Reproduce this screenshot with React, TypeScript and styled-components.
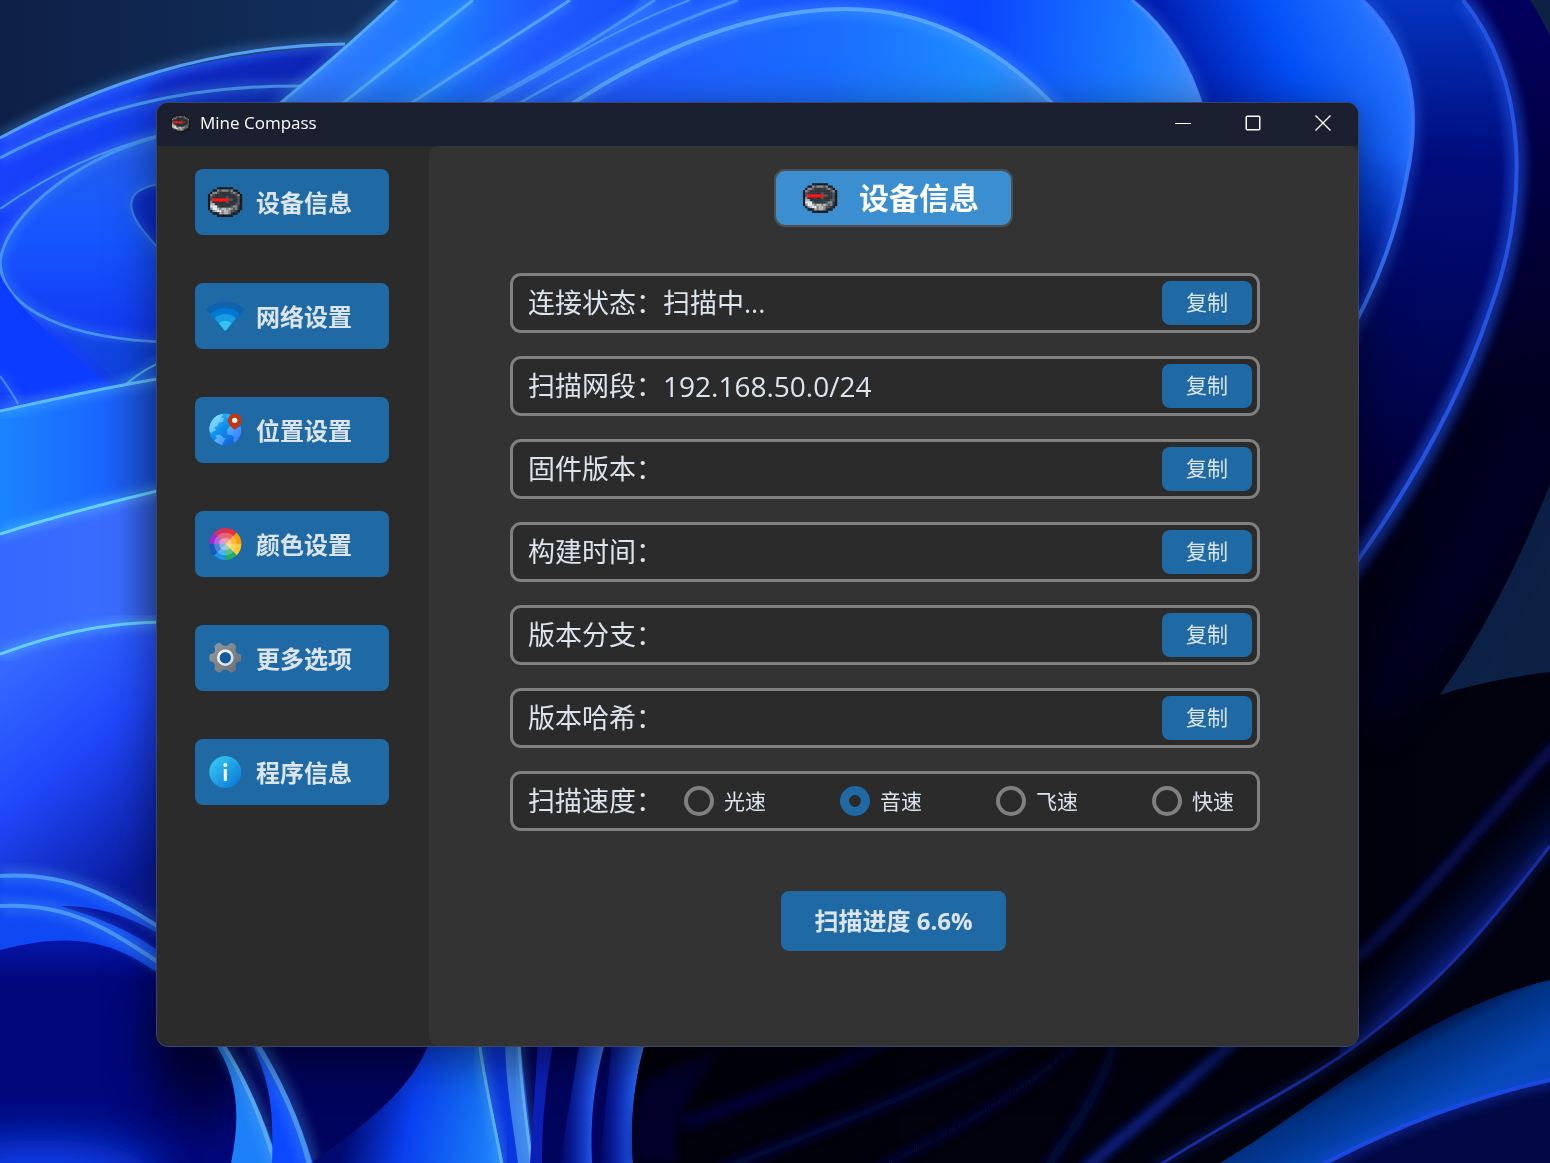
import React, { useState } from "react";
import styled, { createGlobalStyle } from "styled-components";

const GlobalStyle = createGlobalStyle`
  *, *::before, *::after { box-sizing: border-box; }
  body {
    margin: 0;
    background: #0c1f42;
    color: #dce4ee;
    font-family: "Open Sans", "Noto Sans CJK SC", sans-serif;
  }
  button, input { font-family: inherit; }
`;

const Desktop = styled.main`
  position: relative;
  display: flex;
  min-height: 100vh;
  padding: 102px 191px 116px 156px;
  overflow: hidden;
`;

const Backdrop = styled.svg`
  position: absolute;
  inset: 0;
  width: 100%;
  height: 100%;
`;

const Window = styled.section`
  position: relative;
  flex: 1;
  display: flex;
  flex-direction: column;
  border: 1px solid #3a4568;
  border-radius: 12px;
  background: #2b2b2b;
  overflow: hidden;
  box-shadow: 0 12px 48px rgba(0, 0, 0, 0.5);
`;

const TitleBar = styled.header`
  display: flex;
  align-items: center;
  height: 43px;
  padding: 0 0 3px 12px;
  background: #1b2030;
`;

const AppName = styled.span`
  flex: 1;
  margin-left: 8px;
  font-size: 17px;
  line-height: 24px;
  color: #ffffff;
`;

const CaptionButton = styled.button`
  display: grid;
  place-items: center;
  width: 70px;
  height: 100%;
  padding: 0;
  border: 0;
  background: transparent;
  color: #ffffff;
`;

const Body = styled.div`
  flex: 1;
  display: flex;
`;

const Sidebar = styled.nav`
  display: flex;
  flex-direction: column;
  gap: 48px;
  width: 272px;
  padding: 23px 40px 23px 38px;
`;

const NavButton = styled.button`
  display: flex;
  align-items: center;
  gap: 11px;
  height: 66px;
  padding: 0 10px;
  border: 0;
  border-radius: 8px;
  background: #1f6aa5;
  color: #dce4ee;
  font-size: 24px;
  font-weight: 700;
  line-height: 36px;
  white-space: nowrap;
`;

const NavLabel = styled.span`
  padding-top: 2px;
`;

const Panel = styled.div`
  flex: 1;
  display: flex;
  flex-direction: column;
  align-items: center;
  padding: 23px 0;
  border-radius: 9px;
  background: #333333;
`;

const PanelTitle = styled.h1`
  display: flex;
  align-items: center;
  gap: 19px;
  height: 58px;
  margin: 0;
  padding: 0 32px 0 24px;
  border: 2px solid #4d5154;
  border-radius: 11px;
  background: #3b8ed0;
  color: #ffffff;
  font-size: 30px;
  font-weight: 700;
  line-height: 44px;
`;

const FieldList = styled.div`
  display: flex;
  flex-direction: column;
  gap: 23px;
  align-self: stretch;
  margin: 46px 98px 60px 81px;
`;

const Field = styled.div`
  display: flex;
  align-items: center;
  height: 60px;
  padding: 0 5px 0 15px;
  border: 3px solid #808080;
  border-radius: 11px;
  background: #2b2b2b;
`;

const SpeedField = styled(Field)`
  padding-right: 23px;
`;

const FieldText = styled.span<{ $numeric?: boolean }>`
  font-size: ${(p) => (p.$numeric ? 28 : 27)}px;
  line-height: 40px;
  white-space: nowrap;
`;

const CopyButton = styled.button`
  width: 90px;
  height: 44px;
  margin-left: auto;
  padding: 0 0 2px;
  border: 0;
  border-radius: 8px;
  background: #1f6aa5;
  color: #dce4ee;
  font-size: 21px;
  line-height: 30px;
`;

const Options = styled.div`
  flex: 1;
  display: flex;
  justify-content: space-between;
  margin-left: 21px;
`;

const Option = styled.label`
  display: flex;
  align-items: center;
  gap: 10px;
  font-size: 21px;
  line-height: 30px;
`;

const Radio = styled.input`
  appearance: none;
  width: 30px;
  height: 30px;
  margin: 0;
  border: 4px solid #808080;
  border-radius: 50%;

  &:checked {
    border: 9px solid #1f6aa5;
  }
`;

const ScanButton = styled.button`
  height: 60px;
  padding: 0 33px;
  border: 0;
  border-radius: 8px;
  background: #1f6aa5;
  color: #dce4ee;
  font-size: 24px;
  font-weight: 700;
  line-height: 36px;
`;

const COMPASS_ROWS = [
  "....kkkkkkk....",
  "..kkGMGGGMGkk..",
  ".kGGMDDDDDMGMk.",
  "kGMDDDDDDDDDMGk",
  "kMDDDDDDMDDDDMk",
  "kMRRRRRRrMMDDMk",
  "kGDDDDDDMDDDDMk",
  "kLLDDDDDDDDDMMk",
  "kWWWMDDDDDMGGDk",
  "kGWWLGLLGLGMGDk",
  ".kGLWWGLLGMMDk.",
  "..kkDLGLLGDkk..",
  "....kkkkkkk....",
];

const COMPASS_COLORS: Record<string, string> = {
  k: "#1a1a1a",
  D: "#333333",
  M: "#555555",
  G: "#8a8a8a",
  L: "#bdbdbd",
  W: "#ededed",
  R: "#ff1414",
  r: "#d02a2a",
};

const CompassIcon = ({ size = 40 }: { size?: number }) => (
  <svg width={size} height={size} viewBox="-1.3 -2.3 17.6 17.6" aria-hidden="true">
    {COMPASS_ROWS.map((row, y) =>
      row.split("").map((c, x) =>
        c === "." ? null : (
          <rect key={`${x}-${y}`} x={x} y={y} width="1.08" height={c === "R" || c === "r" ? 1.3 : 1.08} fill={COMPASS_COLORS[c]} />
        ),
      ),
    )}
    <path d="M2 5H9V6.3H2Z" fill="#ff1414" />
  </svg>
);

const WifiIcon = () => (
  <svg width="40" height="40" viewBox="0 0 40 40" aria-hidden="true">
    <path d="M1.5 14.5C1 14 1 13 1.7 12.4C12 3.5 28 3.5 38.7 12.4C39.4 13 39.4 14 38.8 14.5L35 18.5L20.3 33L5.5 18.5Z" fill="#0f63ad" />
    <path d="M5.2 18C13 10 27.5 10 35.4 18L20.3 34.5Z" fill="#0078d4" />
    <path d="M9.5 22.5C15 16.5 25.6 16.5 31.1 22.5L20.3 34.5Z" fill="#199be2" />
    <path d="M14 27.5C17 23.7 23.6 23.7 26.6 27.5L21.2 34.2Q20.3 35 19.4 34.2Z" fill="#35c1f1" />
  </svg>
);

const GlobeIcon = () => (
  <svg width="40" height="40" viewBox="0 0 40 40" aria-hidden="true">
    <defs>
      <linearGradient id="sea" x1="0" y1="0" x2="1" y2="1">
        <stop offset="0" stopColor="#29c3ff" />
        <stop offset="0.45" stopColor="#0f8fea" />
        <stop offset="1" stopColor="#1553c9" />
      </linearGradient>
      <linearGradient id="land" gradientUnits="userSpaceOnUse" x1="6" y1="6" x2="34" y2="32">
        <stop offset="0" stopColor="#86e2ff" />
        <stop offset="0.5" stopColor="#5ab0ff" />
        <stop offset="1" stopColor="#2b7dff" />
      </linearGradient>
    </defs>
    <circle cx="20.3" cy="19.5" r="16" fill="url(#sea)" />
    <path d="M4.4 21C3.8 13 9 5.5 16 4.2L18.5 5L16 7L19 8.5L17.5 12L14 12.5L12.5 16L9.500 17L11 20L8 21.500L6.500 23Z" fill="url(#land)" />
    <path d="M10.500 25.500L14.500 24.500L17.500 27L20.500 28.500L18.500 32L17 35.200Q12 33.500 9 30.500L12 28.500Z" fill="url(#land)" />
    <path d="M24.500 16.500L28 16L31 18.500L35.800 16.500Q37.200 22 34.500 27Q33 30 30 32.500L28.500 31L29 27.500L26.500 25L22.500 24.500L22 20Z" fill="url(#land)" />
    <path d="M21 4L26 5L24 8.500L20.500 7Z" fill="#18b9ff" />
    <path d="M29.700 3.500A6.700 6.700 0 0 1 36.400 10.200C36.400 14 33.500 16.500 30.700 19.200Q29.700 20 28.700 19.200C25.900 16.500 23 14 23 10.200A6.700 6.700 0 0 1 29.700 3.500Z" fill="#c8350c" />
    <circle cx="29.700" cy="10.300" r="2.600" fill="#ffffff" />
  </svg>
);

const WHEEL = ["#e8303c", "#fb9f04", "#ffc92b", "#22ab68", "#1a96e4", "#1657c2", "#9a2ed0", "#d8305e"];

const WheelIcon = () => (
  <svg width="40" height="40" viewBox="-20.3 -20 40 40" aria-hidden="true">
    {WHEEL.map((fill, i) => (
      <path key={fill} d="M0 0V-16A16 16 0 0 1 11.314 -11.314Z" fill={fill} stroke={fill} strokeWidth="0.2" transform={`rotate(${i * 45})`} />
    ))}
    <circle r="11.2" fill="#ffffff" opacity="0.25" />
    <circle r="6.2" fill="#ffffff" opacity="0.35" />
  </svg>
);

const GearIcon = () => (
  <svg width="40" height="40" viewBox="-20.3 -19.7 40 40" aria-hidden="true">
    <defs>
      <linearGradient id="steel" x1="0" y1="0" x2="1" y2="1">
        <stop offset="0" stopColor="#979da2" />
        <stop offset="1" stopColor="#666c71" />
      </linearGradient>
      <linearGradient id="steelRing" x1="0" y1="0" x2="1" y2="1">
        <stop offset="0" stopColor="#ffffff" />
        <stop offset="1" stopColor="#d4d8dc" />
      </linearGradient>
    </defs>
    <path
      fill="url(#steel)"
      fillRule="evenodd"
      d="M15.5 -3.5L16 0L15.5 3.5L12.2 4.3Q10 5.5 10.3 8.5L11 11.5L8.5 14L5.3 15L3 12.7Q0 10.8 -3 12.7L-5.3 15L-8.5 14L-11 11.5L-10.3 8.5Q-10 5.5 -12.2 4.3L-15.5 3.5L-16 0L-15.5 -3.5L-12.2 -4.3Q-10 -5.5 -10.3 -8.5L-11 -11.5L-8.5 -14L-5.3 -15L-3 -12.7Q0 -10.8 3 -12.7L5.3 -15L8.5 -14L11 -11.5L10.3 -8.5Q10 -5.5 12.2 -4.3ZM0 -6A6 6 0 1 0 0 6A6 6 0 1 0 0 -6Z"
    />
    <circle r="5.8" fill="#1559a3" />
    <circle r="7" fill="none" stroke="url(#steelRing)" strokeWidth="2.6" />
  </svg>
);

const InfoIcon = () => (
  <svg width="40" height="40" viewBox="0 0 40 40" aria-hidden="true">
    <defs>
      <linearGradient id="info" x1="0" y1="0" x2="1" y2="1">
        <stop offset="0.1" stopColor="#36c6f4" />
        <stop offset="0.9" stopColor="#0a7cd8" />
      </linearGradient>
    </defs>
    <circle cx="20.3" cy="20" r="16" fill="url(#info)" />
    <circle cx="20.3" cy="13" r="2" fill="#ffffff" />
    <rect x="18.8" y="17" width="3" height="12" rx="0.5" fill="#ffffff" />
  </svg>
);

const Ribbon = ({ d, color = "#5aa8ff", width = 3 }: { d: string; color?: string; width?: number }) => (
  <g fill="none">
    <path d={d} stroke={color} strokeWidth={width * 4} opacity="0.3" filter="url(#soft)" />
    <path d={d} stroke={color} strokeWidth={width} opacity="0.9" />
  </g>
);

const Wallpaper = () => (
  <Backdrop viewBox="0 0 1550 1163" preserveAspectRatio="xMidYMid slice" aria-hidden="true">
    <defs>
      <filter id="soft" x="-20%" y="-20%" width="140%" height="140%"><feGaussianBlur stdDeviation="5" /></filter>
      <filter id="haze" x="-50%" y="-50%" width="200%" height="200%"><feGaussianBlur stdDeviation="24" /></filter>
      <linearGradient id="night"><stop offset="0" stopColor="#0d2046" /><stop offset="0.25" stopColor="#12305e" /><stop offset="1" stopColor="#0c2144" /></linearGradient>
      <linearGradient id="petalLeft" x1="0" y1="0" x2="1" y2="0.2"><stop offset="0" stopColor="#1a40ff" /><stop offset="0.35" stopColor="#1440f0" /><stop offset="1" stopColor="#0a1a90" /></linearGradient>
      <linearGradient id="leafLeft" x1="0" y1="0" x2="0" y2="1"><stop offset="0" stopColor="#2460ee" /><stop offset="0.5" stopColor="#1656ff" /><stop offset="1" stopColor="#1238f4" /></linearGradient>
      <linearGradient id="bandTop" gradientUnits="userSpaceOnUse" x1="340" y1="0" x2="640" y2="60"><stop offset="0" stopColor="#2f78ff" /><stop offset="0.35" stopColor="#1c7cff" /><stop offset="0.65" stopColor="#2058ff" /><stop offset="1" stopColor="#1850f8" /></linearGradient>
      <linearGradient id="crown" gradientUnits="userSpaceOnUse" x1="640" y1="0" x2="1200" y2="60"><stop offset="0" stopColor="#2060ff" /><stop offset="0.6" stopColor="#0a44ff" /><stop offset="0.88" stopColor="#1a7cff" /><stop offset="1" stopColor="#4090ff" /></linearGradient>
      <linearGradient id="arch" gradientUnits="userSpaceOnUse" x1="600" y1="60" x2="1050" y2="90"><stop offset="0" stopColor="#2058ff" /><stop offset="0.5" stopColor="#1a6cff" /><stop offset="0.85" stopColor="#1e8cff" /><stop offset="1" stopColor="#3a88f8" /></linearGradient>
      <linearGradient id="right1" gradientUnits="userSpaceOnUse" x1="1200" y1="130" x2="1400" y2="40"><stop offset="0" stopColor="#0018a8" /><stop offset="0.5" stopColor="#0450f8" /><stop offset="1" stopColor="#2a78ff" /></linearGradient>
      <linearGradient id="right1Fade" gradientUnits="userSpaceOnUse" x1="1350" y1="290" x2="1385" y2="150"><stop offset="0" stopColor="#000c80" /><stop offset="1" stopColor="#000c80" stopOpacity="0" /></linearGradient>
      <linearGradient id="right2" gradientUnits="userSpaceOnUse" x1="1400" y1="0" x2="1380" y2="520"><stop offset="0" stopColor="#0434c0" /><stop offset="0.3" stopColor="#000c7c" /><stop offset="1" stopColor="#010034" /></linearGradient>
      <linearGradient id="right3" gradientUnits="userSpaceOnUse" x1="1400" y1="0" x2="1480" y2="700"><stop offset="0" stopColor="#020060" /><stop offset="0.6" stopColor="#01001c" /><stop offset="1" stopColor="#000210" /></linearGradient>
      <linearGradient id="bandA" x1="0" y1="0" x2="1" y2="0"><stop offset="0" stopColor="#1a84ff" /><stop offset="0.6" stopColor="#1b66ff" /><stop offset="1" stopColor="#1a48c8" /></linearGradient>
      <linearGradient id="bandB" x1="0" y1="0" x2="1" y2="0"><stop offset="0" stopColor="#3468ff" /><stop offset="0.7" stopColor="#3a6cff" /><stop offset="1" stopColor="#2c50bc" /></linearGradient>
      <linearGradient id="bandC" gradientUnits="userSpaceOnUse" x1="0" y1="640" x2="170" y2="850"><stop offset="0" stopColor="#3a70ff" /><stop offset="0.5" stopColor="#2048fc" /><stop offset="1" stopColor="#0a1ca0" /></linearGradient>
      <linearGradient id="floor" gradientUnits="userSpaceOnUse" x1="0" y1="920" x2="0" y2="1163"><stop offset="0" stopColor="#0a1cc0" /><stop offset="0.25" stopColor="#00087c" /><stop offset="1" stopColor="#02087c" /></linearGradient>
      <linearGradient id="stem" gradientUnits="userSpaceOnUse" x1="350" y1="1110" x2="500" y2="1140"><stop offset="0" stopColor="#010a70" /><stop offset="0.4" stopColor="#0a40f0" /><stop offset="1" stopColor="#1c84f8" /></linearGradient>
      <linearGradient id="stalk" x1="0" y1="0" x2="1" y2="0"><stop offset="0" stopColor="#0a28d0" stopOpacity="0.1" /><stop offset="0.75" stopColor="#2460f4" /><stop offset="1" stopColor="#4a8cff" /></linearGradient>
      <linearGradient id="wave" gradientUnits="userSpaceOnUse" x1="1380" y1="1020" x2="1430" y2="1110"><stop offset="0" stopColor="#001050" stopOpacity="0" /><stop offset="0.45" stopColor="#003080" /><stop offset="1" stopColor="#0648b8" /></linearGradient>
      <linearGradient id="wave2" gradientUnits="userSpaceOnUse" x1="1400" y1="920" x2="1445" y2="965"><stop offset="0" stopColor="#000418" stopOpacity="0" /><stop offset="1" stopColor="#08186c" /></linearGradient>
    </defs>

    <rect width="1550" height="1163" fill="url(#night)" />

    <path d="M1100 0H1530C1620 140 1610 360 1550 484C1520 560 1480 640 1436 700L1300 800L1100 700Z" fill="url(#right3)" />
    <path d="M640 1163L1300 760C1380 710 1460 682 1550 672V1163Z" fill="#01020e" />
    <path d="M1550 380C1500 480 1430 590 1358 690V740C1440 660 1500 560 1550 460Z" fill="#02064a" opacity="0.4" filter="url(#haze)" />
    <path d="M1200 0H1463C1528 80 1530 200 1490 310C1460 400 1410 490 1340 580L1200 600Z" fill="url(#right2)" />
    <path d="M1463 0C1528 80 1530 200 1490 310C1460 400 1410 490 1340 585" fill="none" stroke="#1840c8" strokeWidth="20" opacity="0.4" filter="url(#soft)" />
    <Ribbon d="M1463 0C1528 80 1530 200 1490 310C1460 400 1410 490 1340 585" color="#2858e8" width={4} />
    <path d="M1100 0H1362C1412 46 1422 110 1406 180C1396 236 1376 290 1340 350L1100 300Z" fill="url(#right1)" />
    <path d="M1340 110H1412L1406 180C1396 236 1376 290 1340 350Z" fill="url(#right1Fade)" />
    <Ribbon d="M1362 0C1412 46 1422 110 1406 180C1396 236 1376 290 1340 350" color="#3a78ff" width={4} />

    <path d="M0 138C100 84 210 46 400 44V420H0Z" fill="url(#petalLeft)" />
    <path d="M160 78C230 58 300 58 345 58L310 92C240 80 190 90 130 110Z" fill="#0820b8" opacity="0.6" filter="url(#soft)" />
    <Ribbon d="M0 138C100 84 210 46 345 44" />
    <Ribbon d="M0 158C80 116 170 84 310 86" color="#4f9cf0" />
    <Ribbon d="M0 209C50 174 100 150 170 132" color="#4f9cf0" width={2} />
    <path d="M170 134C90 150 6 210 0 262C2 310 70 340 170 342Z" fill="url(#leafLeft)" />
    <Ribbon d="M170 134C90 150 6 210 0 262C2 310 70 340 170 342" color="#4a98f4" />
    <path d="M170 182C140 186 128 194 132 210C136 226 152 240 170 262Z" fill="#0c2ccc" />
    <Ribbon d="M170 182C140 186 128 194 132 210C136 226 152 240 170 262" color="#3e88ec" width={2} />
    <path d="M0 275C20 315 70 350 120 395H0Z" fill="#0c3cff" />
    <path d="M62 330C90 344 120 344 170 344V376L120 384Z" fill="#1048e0" opacity="0.7" />
    <Ribbon d="M0 376C6 384 12 392 18 404" color="#4a90ff" width={2} />
    <Ribbon d="M126 384C138 374 150 366 166 360" color="#55b8f0" width={2} />

    <path d="M0 411C50 400 110 386 170 377V495L0 535Z" fill="url(#bandA)" />
    <Ribbon d="M0 411C50 400 110 386 170 377" color="#62c4ff" />
    <path d="M0 534L170 488V624L0 656Z" fill="url(#bandB)" />
    <Ribbon d="M0 534C50 518 110 502 170 488" color="#6cdcff" />
    <path d="M0 654C50 636 100 622 170 622V930L0 900Z" fill="url(#bandC)" />
    <Ribbon d="M0 654C50 636 100 622 170 622" color="#6cd4ff" />
    <path d="M0 876C70 872 110 896 170 934V990H0Z" fill="#1048f4" />
    <path d="M60 906C100 906 130 916 170 940V960C140 934 100 918 60 906Z" fill="#0614a0" />
    <Ribbon d="M0 876C70 872 110 896 170 934" color="#4c9cf8" width={4} />
    <path d="M0 950C90 926 130 950 180 990L500 1020V1163H0Z" fill="url(#floor)" />
    <Ribbon d="M0 906C70 902 110 930 170 970" color="#4c9cf8" width={4} />
    <ellipse cx="40" cy="1180" rx="120" ry="40" fill="#0a48ff" opacity="0.9" filter="url(#haze)" />
    <ellipse cx="200" cy="1060" rx="50" ry="70" fill="#000430" opacity="0.8" filter="url(#haze)" />

    <path d="M222 1040H700V1163H250Z" fill="#01045c" />
    <path d="M213 1040C236 1074 242 1110 231 1163H278C266 1120 244 1074 222 1040Z" fill="#1c80f8" />
    <Ribbon d="M220 1040C246 1080 262 1120 276 1166" color="#5cacf4" width={4} />
    <path d="M250 1040C270 1080 274 1110 272 1163H313C300 1120 280 1076 258 1040Z" fill="#0c48ff" />
    <Ribbon d="M254 1040C280 1080 298 1120 310 1166" color="#4c98ec" width={5} />
    <path d="M430 1040C412 1090 370 1120 312 1163H504L478 1040Z" fill="url(#stem)" />
    <path d="M478 1040L504 1163H534L520 1040Z" fill="#0a38e0" />
    <Ribbon d="M479 1040C484 1080 494 1120 502 1166" color="#5cb4e8" />
    <path d="M505 1040C506 1090 514 1130 518 1163H534C526 1120 522 1080 520 1040Z" fill="#3c80ec" />
    <Ribbon d="M519 1040C520 1080 526 1120 532 1166" color="#62b4f0" />
    <path d="M538 1040H554C546 1080 542 1120 542 1163H530Z" fill="#0c20b8" />
    <path d="M580 1040H606C594 1080 590 1120 592 1163H560Z" fill="url(#stalk)" />
    <path d="M612 1040H646C634 1080 630 1120 633 1163H600Z" fill="url(#stalk)" />
    <path d="M646 1040C634 1080 630 1120 633 1163H900V1040Z" fill="#01010c" />
    <path d="M646 1080L728 1044C690 1084 674 1120 676 1163H633C631 1130 636 1100 646 1080Z" fill="#020638" opacity="0.7" filter="url(#soft)" />
    <g fill="none" filter="url(#soft)">
      <path d="M684 1124C780 1090 860 1060 960 1000" stroke="#04065a" strokeWidth="12" opacity="0.6" />
      <path d="M720 1170C820 1130 930 1090 1020 1040" stroke="#04074a" strokeWidth="8" />
      <path d="M880 1166C960 1130 1040 1080 1080 1040" stroke="#050a48" strokeWidth="6" />
      <path d="M1045 1170C1080 1120 1100 1090 1114 1046" stroke="#061048" strokeWidth="8" />
      <path d="M1082 1172C1130 1130 1180 1090 1240 1036" stroke="#0a2090" strokeWidth="10" />
      <path d="M1340 972C1400 924 1460 850 1560 740" stroke="#0a1c80" strokeWidth="8" opacity="0.8" />
    </g>
    <path d="M1340 1056C1420 1000 1470 950 1550 846V780C1480 860 1420 930 1340 990Z" fill="url(#wave2)" />
    <Ribbon d="M1155 1168C1230 1120 1310 1080 1358 1044C1430 990 1470 950 1550 846" color="#1a30a8" width={3} />
    <path d="M1220 1163C1310 1110 1420 1010 1550 980V1080C1470 1100 1400 1130 1325 1163Z" fill="url(#wave)" />
    <path d="M1325 1163C1400 1124 1470 1098 1550 1080V1163Z" fill="#020844" />
    <Ribbon d="M1320 1166C1400 1124 1470 1098 1554 1079" color="#1c4ce8" width={4} />

    <path d="M397 0C360 36 320 70 270 112H760L900 0Z" fill="url(#bandTop)" />
    <path d="M640 0H1132C1170 30 1192 70 1204 112H500C560 70 620 30 640 0Z" fill="url(#crown)" />
    <path d="M560 112C680 30 780 9 846 9C930 9 1004 50 1060 112Z" fill="url(#arch)" />
    <Ribbon d="M397 0C360 36 320 70 270 112" color="#58b0ff" />
    <Ribbon d="M473 0C430 34 390 66 332 112" color="#58b0ff" />
    <Ribbon d="M570 0C520 34 460 70 398 112" color="#58a8ff" />
    <Ribbon d="M655 0C590 42 550 68 466 112" color="#4c98ff" />
    <Ribbon d="M690 0C620 26 560 64 490 102" color="#4c98ff" width={2} />
    <Ribbon d="M738 0C650 30 580 68 504 112" color="#4c98ff" />
    <Ribbon d="M560 112C680 30 780 9 846 9C930 9 1004 50 1060 112" color="#5aa8ff" width={4} />
    <Ribbon d="M1132 0C1170 30 1192 70 1204 112" color="#4a90ff" />
  </Backdrop>
);

const NAV_ITEMS = [
  { label: "设备信息", icon: <CompassIcon /> },
  { label: "网络设置", icon: <WifiIcon /> },
  { label: "位置设置", icon: <GlobeIcon /> },
  { label: "颜色设置", icon: <WheelIcon /> },
  { label: "更多选项", icon: <GearIcon /> },
  { label: "程序信息", icon: <InfoIcon /> },
];

const FIELDS = [
  { label: "连接状态：", value: "扫描中..." },
  { label: "扫描网段：", value: "192.168.50.0/24", numeric: true },
  { label: "固件版本：", value: "" },
  { label: "构建时间：", value: "" },
  { label: "版本分支：", value: "" },
  { label: "版本哈希：", value: "" },
];

const SPEEDS = ["光速", "音速", "飞速", "快速"];

export default function App() {
  const [speed, setSpeed] = useState("音速");

  return (
    <Desktop lang="zh-CN">
      <GlobalStyle />
      <Wallpaper />
      <Window>
        <TitleBar>
          <CompassIcon size={23} />
          <AppName>Mine Compass</AppName>
          <CaptionButton aria-label="最小化">
            <svg width="16" height="16"><path d="M0 8.5H16" stroke="currentColor" /></svg>
          </CaptionButton>
          <CaptionButton aria-label="最大化">
            <svg width="16" height="16"><rect x="1.25" y="1.25" width="13.5" height="13.5" rx="1" fill="none" stroke="currentColor" strokeWidth="1.5" /></svg>
          </CaptionButton>
          <CaptionButton aria-label="关闭">
            <svg width="16" height="16"><path d="M0.5 0.5L15.5 15.5M15.5 0.5L0.5 15.5" stroke="currentColor" strokeWidth="1.4" /></svg>
          </CaptionButton>
        </TitleBar>
        <Body>
          <Sidebar>
            {NAV_ITEMS.map((item) => (
              <NavButton key={item.label}>
                {item.icon}
                <NavLabel>{item.label}</NavLabel>
              </NavButton>
            ))}
          </Sidebar>
          <Panel>
            <PanelTitle>
              <CompassIcon />
              设备信息
            </PanelTitle>
            <FieldList>
              {FIELDS.map((field) => (
                <Field key={field.label}>
                  <FieldText>{field.label}</FieldText>
                  <FieldText $numeric={field.numeric}>{field.value}</FieldText>
                  <CopyButton>复制</CopyButton>
                </Field>
              ))}
              <SpeedField role="radiogroup" aria-labelledby="speed-label">
                <FieldText id="speed-label">扫描速度：</FieldText>
                <Options>
                  {SPEEDS.map((name) => (
                    <Option key={name}>
                      <Radio type="radio" name="speed" value={name} checked={speed === name} onChange={() => setSpeed(name)} />
                      {name}
                    </Option>
                  ))}
                </Options>
              </SpeedField>
            </FieldList>
            <ScanButton>扫描进度 6.6%</ScanButton>
          </Panel>
        </Body>
      </Window>
    </Desktop>
  );
}
